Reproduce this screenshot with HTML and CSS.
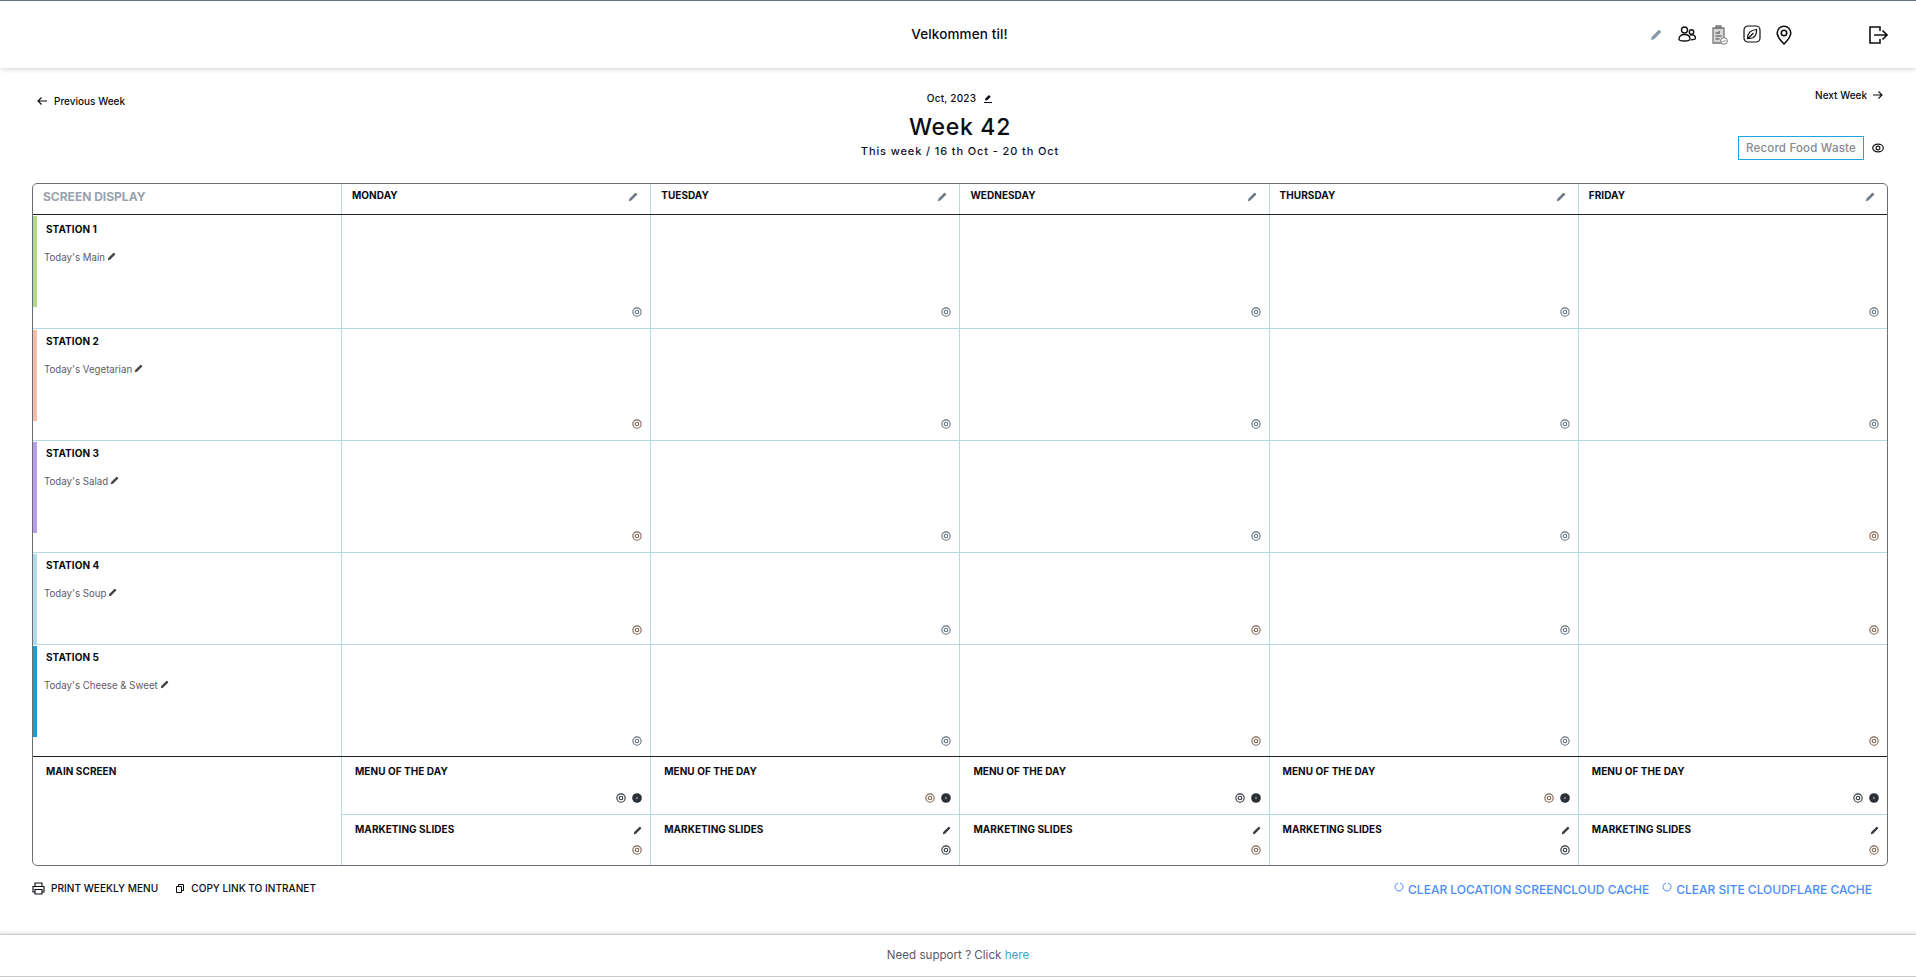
FILE: index.html
```html
<!DOCTYPE html>
<html lang="en">
<head>
<meta charset="utf-8">
<title>Week 42</title>
<link rel="stylesheet" href="styles.css">
</head>
<body>
<svg class="defs" aria-hidden="true">
  <symbol id="pencil" viewBox="0 0 12 12"><path d="M1 11l.7-3L8.400 1.300a1 1 0 0 1 1.400 0l.9.9a1 1 0 0 1 0 1.400L4 10.300z" fill="currentColor"/></symbol>
  <symbol id="eye" viewBox="0 0 12 12"><circle cx="6" cy="6" r="5" fill="none" stroke="currentColor" stroke-width="1.300"/><circle cx="6" cy="6" r="2.100" fill="none" stroke="currentColor" stroke-width="1.300"/></symbol>
  <symbol id="eyewide" viewBox="0 0 12 10"><ellipse cx="6" cy="5" rx="5.300" ry="3.900" fill="none" stroke="currentColor" stroke-width="1.200"/><circle cx="6" cy="5" r="1.900" fill="none" stroke="currentColor" stroke-width="1.200"/></symbol>
  <symbol id="eyeoff" viewBox="0 0 12 12"><circle cx="6" cy="6" r="5.800" fill="currentColor"/><circle cx="6" cy="6" r="1.500" fill="#777"/></symbol>
</svg>

<header class="topbar">
  <div></div>
  <h1 class="welcome">Velkommen til!</h1>
  <nav class="tools">
    <svg class="ti ti-pencil"><use href="#pencil"/></svg>
    <svg class="ti ti-people" viewBox="0 0 18 16" fill="none" stroke="currentColor" stroke-width="1.400"><circle cx="6.500" cy="4" r="3"/><circle cx="13.500" cy="6" r="2.200"/><path d="M1 13c0-3 2.500-4.500 5.500-4.500S12 10 12 13c0 1.500-1.500 2-5.500 2S1 14.500 1 13z"/><path d="M12 9c3-.8 5.500.5 5.500 3 0 1.300-1.500 1.700-4.500 1.700"/></svg>
    <svg class="ti ti-clip" viewBox="0 0 17 20" fill="none" stroke="currentColor" stroke-width="1.300"><path d="M2 3h11v15H2z" fill="#d6d6d6"/><path d="M5 3V1h5v2z" fill="#bbb"/><path d="M4.500 8h3M4.500 11h6M4.500 14h4M8 6v3" stroke-width="1.500"/><circle cx="13" cy="16" r="3.300" fill="#fff" stroke-width="1"/><path d="M11.500 16l1 1 2-2" stroke-width="1"/></svg>
    <svg class="ti ti-leaf" viewBox="0 0 18 18" fill="none" stroke="currentColor" stroke-width="1.200"><rect x="1" y="1" width="16" height="16" rx="4"/><path d="M4.500 13.500c0-5 3-8.500 9-9 .5 5-2 9-6.500 9-1 0-1.800-.3-2.500 0zM5 13.500L10.500 8"/></svg>
    <svg class="ti ti-pin" viewBox="0 0 16 20" fill="none" stroke="currentColor" stroke-width="1.600"><path d="M8 19C4 15 1.200 12 1.200 8a6.800 6.800 0 0 1 13.600 0c0 4-2.800 7-6.800 11z"/><circle cx="8" cy="8" r="2.700"/></svg>
    <svg class="ti ti-logout" viewBox="0 0 19 18" fill="none" stroke="currentColor" stroke-width="1.600"><path d="M11 5V1H1v16h10v-4"/><path d="M5 9h13M13.500 4.500L18 9l-4.500 4.500"/></svg>
  </nav>
</header>

<main class="page">
  <section class="week-head">
    <a class="nav-link nav-prev"><svg class="arrow" viewBox="0 0 10 10" fill="none" stroke="currentColor" stroke-width="1.100"><path d="M10 5H1M4.500 1.500L1 5l3.500 3.500"/></svg>Previous Week</a>
    <div class="week-title">
      <div class="month">Oct, 2023 <svg class="month-edit" viewBox="0 0 10 10"><path d="M1 7l.5-2L5.500 1l2 2-4 4zM0 9h9v1H0z" fill="currentColor"/></svg></div>
      <h2 class="week-num">Week 42</h2>
      <div class="week-range">This week / 16 th Oct - 20 th Oct</div>
    </div>
    <div class="week-side">
      <a class="nav-link nav-next">Next Week<svg class="arrow" viewBox="0 0 10 10" fill="none" stroke="currentColor" stroke-width="1.100"><path d="M0 5h9M5.500 1.500L9 5 5.500 8.500"/></svg></a>
      <div class="waste"><button class="waste-btn">Record Food Waste</button><svg class="waste-eye"><use href="#eyewide"/></svg></div>
    </div>
  </section>

  <section class="grid">
    <div class="row row-head">
      <div class="cell first head-title">SCREEN DISPLAY</div>
      <div class="cell day">MONDAY<svg class="ic-p"><use href="#pencil"/></svg></div>
      <div class="cell day">TUESDAY<svg class="ic-p"><use href="#pencil"/></svg></div>
      <div class="cell day">WEDNESDAY<svg class="ic-p"><use href="#pencil"/></svg></div>
      <div class="cell day">THURSDAY<svg class="ic-p"><use href="#pencil"/></svg></div>
      <div class="cell day">FRIDAY<svg class="ic-p"><use href="#pencil"/></svg></div>
    </div>

    <div class="row row-tall">
      <div class="cell first station st-green"><div class="st-name">STATION 1</div><div class="st-sub">Today's Main <svg class="ic-s"><use href="#pencil"/></svg></div></div>
      <div class="cell slot"><svg class="ic-e"><use href="#eye"/></svg></div>
      <div class="cell slot"><svg class="ic-e"><use href="#eye"/></svg></div>
      <div class="cell slot"><svg class="ic-e"><use href="#eye"/></svg></div>
      <div class="cell slot"><svg class="ic-e"><use href="#eye"/></svg></div>
      <div class="cell slot"><svg class="ic-e"><use href="#eye"/></svg></div>
    </div>
    <div class="row row-mid">
      <div class="cell first station st-salmon"><div class="st-name">STATION 2</div><div class="st-sub">Today's Vegetarian <svg class="ic-s"><use href="#pencil"/></svg></div></div>
      <div class="cell slot"><svg class="ic-e warm"><use href="#eye"/></svg></div>
      <div class="cell slot"><svg class="ic-e"><use href="#eye"/></svg></div>
      <div class="cell slot"><svg class="ic-e"><use href="#eye"/></svg></div>
      <div class="cell slot"><svg class="ic-e"><use href="#eye"/></svg></div>
      <div class="cell slot"><svg class="ic-e"><use href="#eye"/></svg></div>
    </div>
    <div class="row row-mid">
      <div class="cell first station st-purple"><div class="st-name">STATION 3</div><div class="st-sub">Today's Salad <svg class="ic-s"><use href="#pencil"/></svg></div></div>
      <div class="cell slot"><svg class="ic-e warm"><use href="#eye"/></svg></div>
      <div class="cell slot"><svg class="ic-e"><use href="#eye"/></svg></div>
      <div class="cell slot"><svg class="ic-e"><use href="#eye"/></svg></div>
      <div class="cell slot"><svg class="ic-e"><use href="#eye"/></svg></div>
      <div class="cell slot"><svg class="ic-e warm"><use href="#eye"/></svg></div>
    </div>
    <div class="row row-short">
      <div class="cell first station st-sky"><div class="st-name">STATION 4</div><div class="st-sub">Today's Soup <svg class="ic-s"><use href="#pencil"/></svg></div></div>
      <div class="cell slot"><svg class="ic-e warm"><use href="#eye"/></svg></div>
      <div class="cell slot"><svg class="ic-e"><use href="#eye"/></svg></div>
      <div class="cell slot"><svg class="ic-e warm"><use href="#eye"/></svg></div>
      <div class="cell slot"><svg class="ic-e"><use href="#eye"/></svg></div>
      <div class="cell slot"><svg class="ic-e warm"><use href="#eye"/></svg></div>
    </div>
    <div class="row row-mid row-last">
      <div class="cell first station st-blue"><div class="st-name">STATION 5</div><div class="st-sub">Today's Cheese &amp; Sweet <svg class="ic-s"><use href="#pencil"/></svg></div></div>
      <div class="cell slot"><svg class="ic-e"><use href="#eye"/></svg></div>
      <div class="cell slot"><svg class="ic-e"><use href="#eye"/></svg></div>
      <div class="cell slot"><svg class="ic-e warm"><use href="#eye"/></svg></div>
      <div class="cell slot"><svg class="ic-e"><use href="#eye"/></svg></div>
      <div class="cell slot"><svg class="ic-e warm"><use href="#eye"/></svg></div>
    </div>

    <div class="row row-main">
      <div class="cell first main-label">MAIN SCREEN</div>
      <div class="cell main-col">
        <div class="sub motd"><span class="sub-t">MENU OF THE DAY</span><div class="sub-ic pair"><svg class="ic-m"><use href="#eye"/></svg><svg class="ic-m"><use href="#eyeoff"/></svg></div></div>
        <div class="sub mkt"><span class="sub-t">MARKETING SLIDES</span><svg class="ic-mp"><use href="#pencil"/></svg><div class="sub-ic"><svg class="ic-m warm"><use href="#eye"/></svg></div></div>
      </div>
      <div class="cell main-col">
        <div class="sub motd"><span class="sub-t">MENU OF THE DAY</span><div class="sub-ic pair"><svg class="ic-m warm"><use href="#eye"/></svg><svg class="ic-m"><use href="#eyeoff"/></svg></div></div>
        <div class="sub mkt"><span class="sub-t">MARKETING SLIDES</span><svg class="ic-mp"><use href="#pencil"/></svg><div class="sub-ic"><svg class="ic-m"><use href="#eye"/></svg></div></div>
      </div>
      <div class="cell main-col">
        <div class="sub motd"><span class="sub-t">MENU OF THE DAY</span><div class="sub-ic pair"><svg class="ic-m"><use href="#eye"/></svg><svg class="ic-m"><use href="#eyeoff"/></svg></div></div>
        <div class="sub mkt"><span class="sub-t">MARKETING SLIDES</span><svg class="ic-mp"><use href="#pencil"/></svg><div class="sub-ic"><svg class="ic-m warm"><use href="#eye"/></svg></div></div>
      </div>
      <div class="cell main-col">
        <div class="sub motd"><span class="sub-t">MENU OF THE DAY</span><div class="sub-ic pair"><svg class="ic-m warm"><use href="#eye"/></svg><svg class="ic-m"><use href="#eyeoff"/></svg></div></div>
        <div class="sub mkt"><span class="sub-t">MARKETING SLIDES</span><svg class="ic-mp"><use href="#pencil"/></svg><div class="sub-ic"><svg class="ic-m"><use href="#eye"/></svg></div></div>
      </div>
      <div class="cell main-col">
        <div class="sub motd"><span class="sub-t">MENU OF THE DAY</span><div class="sub-ic pair"><svg class="ic-m"><use href="#eye"/></svg><svg class="ic-m"><use href="#eyeoff"/></svg></div></div>
        <div class="sub mkt"><span class="sub-t">MARKETING SLIDES</span><svg class="ic-mp"><use href="#pencil"/></svg><div class="sub-ic"><svg class="ic-m warm"><use href="#eye"/></svg></div></div>
      </div>
    </div>
  </section>

  <section class="actions">
    <div class="act-left">
      <a class="act"><svg class="ic-print" viewBox="0 0 13 13" fill="none" stroke="currentColor" stroke-width="1.100"><path d="M3 4V1h7v3M3 10H1V4.500h11V10h-2"/><path d="M3 7.500h7V12H3z"/></svg>PRINT WEEKLY MENU</a>
      <a class="act act-copy"><svg class="ic-copy" viewBox="0 0 8 9" fill="none" stroke="currentColor" stroke-width="1"><path d="M.5 2.500h5v6h-5zM2.500 2.500V.5h5v6h-2"/></svg>COPY LINK TO INTRANET</a>
    </div>
    <div class="act-right">
      <a class="clear"><svg class="ic-ref" viewBox="0 0 10 10" fill="none" stroke="currentColor" stroke-width="1"><path d="M6 1.100a4 4 0 1 1-2 0"/></svg>CLEAR LOCATION SCREENCLOUD CACHE</a>
      <a class="clear"><svg class="ic-ref" viewBox="0 0 10 10" fill="none" stroke="currentColor" stroke-width="1"><path d="M6 1.100a4 4 0 1 1-2 0"/></svg>CLEAR SITE CLOUDFLARE CACHE</a>
    </div>
  </section>
</main>

<footer class="foot">Need support ? Click <a class="foot-link">here</a></footer>
</body>
</html>
```
FILE: styles.css
```css
* { box-sizing: border-box; }
html, body { margin: 0; padding: 0; }
body {
  width: 1916px;
  height: 977px;
  overflow: hidden;
  background: #fff;
  color: #0b0b12;
  font-family: Inter, "Liberation Sans", sans-serif;
}
.defs { display: none; }
svg { display: block; flex: none; }

.topbar {
  height: 68px;
  border-top: 1px solid #66757f;
  box-shadow: 0 1px 5px rgba(0,0,0,.18);
  display: grid;
  grid-template-columns: 1fr auto 1fr;
  align-items: center;
  position: relative;
}
.welcome { margin: 0 0 1px 3px; font-size: 13.500px; font-weight: 500; letter-spacing: .12px; }
.tools { display: flex; align-items: center; justify-content: flex-end; padding-right: 28px; }
.ti { color: #111; }
.ti-pencil { width: 12px; height: 12px; color: #8496a8; margin-right: 16px; }
.ti-people { width: 18px; height: 16px; margin-right: 15px; margin-bottom: 1px; }
.ti-clip { width: 17px; height: 20px; color: #777; margin-right: 15px; }
.ti-leaf { width: 18px; height: 18px; margin-right: 15px; margin-bottom: 1px; }
.ti-pin { width: 16px; height: 20px; margin-right: 77px; }
.ti-logout { width: 19px; height: 18px; }

.page { padding: 0 28px 0 32px; }
.week-head {
  height: 115px;
  display: grid;
  grid-template-columns: 1fr auto 1fr;
}
.nav-link { display: flex; align-items: center; font-size: 10px; font-weight: 500; }
.arrow { width: 10px; height: 10px; }
.nav-prev { align-self: start; margin-top: 27px; padding-left: 5px; gap: 7px; }
.week-title { text-align: center; padding-top: 24px; }
.month { display: flex; align-items: center; justify-content: center; gap: 8px; font-size: 10px; font-weight: 500; height: 12px; letter-spacing: .2px; }
.month-edit { width: 9px; height: 9px; }
.week-num { margin: 9px 0 0; font-size: 23px; font-weight: 500; line-height: 28px; letter-spacing: .7px; }
.week-range { font-size: 11px; font-weight: 500; line-height: 14px; margin-top: 3px; letter-spacing: .88px; color: #11112a; }
.week-side { display: flex; flex-direction: column; align-items: flex-end; padding-top: 21px; }
.nav-next { gap: 6px; padding-right: 5px; height: 12px; }
.waste { display: flex; align-items: center; gap: 8px; margin-top: 35px; padding-right: 4px; }
.waste-btn {
  width: 126px; height: 24px;
  border: 1px solid #1ba6e0;
  background: #fff;
  padding: 0;
  color: #84898f;
  font: 500 11.500px Inter, "Liberation Sans", sans-serif;
  letter-spacing: .2px;
}
.waste-eye { width: 12px; height: 10px; color: #111; }

.grid {
  width: 1856px;
  height: 683px;
  border: 1px solid #6a6f78;
  border-radius: 5px;
  display: flex;
  flex-direction: column;
  overflow: hidden;
}
.row { display: grid; grid-template-columns: 308px repeat(5, 1fr); border-bottom: 1px solid #b6d9e8; flex: none; }
.row-head { height: 31px; border-bottom: 1px solid #222; }
.row-tall { height: 114px; }
.row-mid { height: 112px; }
.row-short { height: 92px; }
.row-last { border-bottom: 1px solid #222; }
.row-main { flex: 1; border-bottom: 0; }
.cell { border-left: 1px solid #b6d9e8; position: relative; min-width: 0; }
.first { border-left: 0; }

.head-title { padding: 6px 0 0 10px; font-size: 12px; font-weight: 700; color: #9aa3ad; line-height: 14px; }
.day { padding: 4px 12px 0 10px; font-size: 10px; font-weight: 700; line-height: 14px; letter-spacing: .05px; display: flex; justify-content: space-between; }
.ic-p { width: 10px; height: 10px; color: #6e7a86; margin-top: 4px; }

.station { padding: 5px 0 0 13px; }
.row-tall .station { padding-top: 7px; }
.station::before { content: ""; position: absolute; left: 0; top: 1px; width: 4px; height: 91px; background: var(--bar); }
.st-green { --bar: #b5d98b; }
.st-salmon { --bar: #f3bcab; }
.st-purple { --bar: #b79ee6; }
.st-sky { --bar: #b4d9e9; }
.st-blue { --bar: #169fd8; }
.st-name { font-size: 10px; font-weight: 700; line-height: 14px; letter-spacing: .05px; }
.st-sub { display: flex; align-items: center; gap: 2px; margin: 15px 0 0 -2px; font-size: 9.700px; line-height: 14px; color: #5f5a66; }
.ic-s { width: 9px; height: 9px; color: #444; margin-top: -3px; }
.slot { display: flex; align-items: flex-end; justify-content: flex-end; padding: 0 8px 11px 0; }
.row-short .slot { padding-bottom: 9px; }
.row-last .slot { padding-bottom: 10px; }
.ic-e { width: 10px; height: 10px; color: #5e6e7c; }
.ic-e.warm, .ic-m.warm { color: #7d5f4d; }

.main-label { padding: 7px 0 0 13px; font-size: 10px; font-weight: 700; line-height: 14px; letter-spacing: .05px; }
.main-col { display: flex; flex-direction: column; }
.sub { position: relative; padding-left: 13px; }
.sub-t { display: block; font-size: 10px; font-weight: 700; line-height: 14px; letter-spacing: .05px; }
.motd { height: 58px; padding-top: 7px; border-bottom: 1px solid #b6d9e8; }
.mkt { flex: 1; padding-top: 7px; }
.sub-ic { position: absolute; right: 8px; display: flex; gap: 6px; }
.motd .sub-ic { top: 36px; }
.mkt .sub-ic { top: 30px; }
.ic-m { width: 10px; height: 10px; color: #2a3038; }
.ic-mp { position: absolute; right: 8px; top: 11px; width: 9px; height: 9px; color: #3c3c44; }

.actions { display: flex; justify-content: space-between; padding: 15px 16px 0 0; }
.act-left, .act-right { display: flex; }
.act { display: flex; align-items: center; gap: 6px; font-size: 10.100px; font-weight: 500; height: 14px; }
.act-copy { margin-left: 18px; gap: 7px; }
.ic-print { width: 13px; height: 13px; }
.ic-copy { width: 8px; height: 9px; }
.clear { display: flex; align-items: center; gap: 4px; color: #4a8cf7; font-size: 12px; font-weight: 500; margin-left: 13px; height: 16px; }
.ic-ref { width: 10px; height: 10px; margin-top: -5px; }

.foot {
  position: absolute;
  left: 0; right: 0; bottom: 0;
  height: 43px;
  border-top: 1px solid #cfcfcf;
  border-bottom: 1px solid #c9c9c9;
  box-shadow: 0 -1px 3px rgba(0,0,0,.15);
  text-align: center;
  font-size: 11.600px;
  line-height: 41px;
  color: #5a5a62;
}
.foot-link { color: #3ba9cb; }
```
